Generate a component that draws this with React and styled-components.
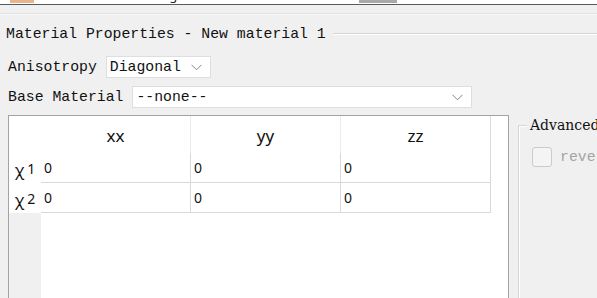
import React from "react";
import styled, { createGlobalStyle } from "styled-components";

const Global = createGlobalStyle`
  html, body { margin: 0; padding: 0; background: #f0f0f0; overflow: hidden; }
  body { width: 597px; height: 298px; }
  * { box-sizing: border-box; }
`;

const Page = styled.div`
  width: 597px;
  height: 298px;
  overflow: hidden;
  display: flex;
  flex-direction: column;
  background: #f0f0f0;
`;

const TopStrip = styled.div`
  height: 5px;
  background: #ffffff;
  border-bottom: 1px solid #5a5a5a;
  overflow: hidden;
  display: flex;
  align-items: flex-end;
`;

const StripItem = styled.span`
  flex: none;
  margin-left: ${(p) => p.$ml}px;
  width: ${(p) => p.$w}px;
  height: 16px;
  margin-top: -13px;
  line-height: 16px;
  font-family: "Noto Sans", sans-serif;
  font-size: 13px;
  color: #222;
  white-space: nowrap;
  overflow: hidden;
  background: ${(p) => p.$bg || "transparent"};
  align-self: flex-start;
`;

const Separator = styled.div`
  margin-top: 8px;
  height: 2px;
  border-top: 1px solid #e2e2e2;
  border-bottom: 1px solid #fafafa;
`;

const Body = styled.div`
  padding: 9px 0 0 8px;
  display: flex;
  flex-direction: column;
  flex: 1;
  min-height: 0;
`;

const TitleRow = styled.div`
  display: flex;
  align-items: center;
  height: 19px;
  margin-left: -2px;
`;

const Title = styled.span`
  font-family: "Liberation Mono", monospace;
  font-size: 14.8px;
  color: #111;
  white-space: nowrap;
`;

const Groove = styled.div`
  flex: 1;
  margin-left: 7px;
  height: 2px;
  border-top: 1px solid #d6d6d6;
  border-bottom: 1px solid #ffffff;
`;

const FormRow = styled.div`
  display: flex;
  align-items: center;
  gap: 9px;
  height: 22px;
  margin-top: ${(p) => p.$mt}px;
`;

const Label = styled.span`
  font-family: "Liberation Mono", monospace;
  font-size: 14.8px;
  color: #111;
  white-space: nowrap;
`;

const Combo = styled.div`
  width: ${(p) => p.$w}px;
  height: 22px;
  background: #ffffff;
  border: 1px solid #dedede;
  display: flex;
  align-items: center;
  padding: 0 8px 0 3px;
  font-family: "Liberation Mono", monospace;
  font-size: 14.8px;
  color: #111;
`;

const ComboText = styled.span`
  flex: 1;
  white-space: nowrap;
`;

const Chevron = () => (
  <svg width="11" height="7" viewBox="0 0 11 7">
    <polyline points="0.5,0.8 5.5,5.8 10.5,0.8" fill="none" stroke="#858585" strokeWidth="1" />
  </svg>
);

const Main = styled.div`
  display: flex;
  gap: 9px;
  margin-top: 7px;
  flex: 1;
  min-height: 0;
`;

const TableBox = styled.div`
  width: 501px;
  height: 200px;
  flex: none;
  border: 1px solid #a3a3a3;
  border-bottom: none;
  background: #ffffff;
  display: grid;
  grid-template-columns: 32px 150px 150px 150px 1fr;
  grid-template-rows: 37px 30px 30px 1fr;
`;

const Corner = styled.div`
  background: #ffffff;
`;

const HeadCell = styled.div`
  display: flex;
  align-items: center;
  justify-content: center;
  font-family: "Noto Sans", sans-serif;
  font-size: 17px;
  color: #111;
  border-right: 1px solid ${(p) => (p.$last ? "#dcdcdc" : "#ececec")};
  padding-top: 1px;
`;

const RowHead = styled.div`
  display: flex;
  align-items: center;
  justify-content: center;
  font-family: "Noto Sans", sans-serif;
  color: #111;
  background: #ffffff;
`;

const Chi = styled.span`
  font-size: 16px;
  line-height: 1;
  transform: translateY(2px);
`;

const Sub = styled.span`
  font-size: 14px;
  margin-left: 3px;
  line-height: 1;
  transform: translateY(1px);
`;

const Cell = styled.div`
  display: flex;
  align-items: center;
  padding-left: 3px;
  font-family: "Noto Sans", sans-serif;
  font-size: 14px;
  color: #111;
  border-right: 1px solid #d9d9d9;
  border-bottom: 1px solid #d9d9d9;
`;

const Blank = styled.div``;

const EmptyRowHeads = styled.div`
  background: #f0f0f0;
  grid-column: 1;
`;

const EmptyArea = styled.div`
  grid-column: 2 / span 4;
  background: #ffffff;
`;

const Group = styled.div`
  flex: 1;
  min-width: 0;
  position: relative;
`;

const GroupFrame = styled.div`
  margin-top: 10px;
  height: 200px;
  border-top: 1px solid #d6d6d6;
  border-left: 1px solid #d6d6d6;
  box-shadow: inset 1px 1px 0 #ffffff;
  padding: 21px 0 0 13px;
`;

const GroupTitle = styled.span`
  position: absolute;
  left: 9px;
  top: 0px;
  padding: 0 3px;
  background: #f0f0f0;
  font-family: "DejaVu Serif", serif;
  font-size: 14px;
  line-height: 20px;
  color: #111;
  white-space: nowrap;
`;

const CheckRow = styled.div`
  display: flex;
  align-items: center;
  gap: 8px;
  white-space: nowrap;
`;

const Box = styled.div`
  width: 20px;
  height: 20px;
  flex: none;
  border: 1px solid #cbcbcb;
  border-radius: 3px;
  background: #f4f4f4;
`;

const CheckLabel = styled.span`
  font-family: "Liberation Mono", monospace;
  font-size: 14.8px;
  color: #a4a4a4;
`;

const cols = ["xx", "yy", "zz"];
const rows = ["1", "2"];

export default function App() {
  return (
    <Page>
      <Global />
      <TopStrip>
        <StripItem $ml={10} $w={24} $bg="#e8b48a" />
        <StripItem $ml={51} $w={110}>Attributes&nbsp;&nbsp;&nbsp;Tags</StripItem>
        <StripItem $ml={164} $w={38} $bg="#a9a9a9" />
        <StripItem $ml={8} $w={100}>Simulati... Coord</StripItem>
        <StripItem $ml={95} $w={30} $bg="#3c6fb0" />
      </TopStrip>
      <Separator />
      <Body>
        <TitleRow>
          <Title>Material Properties - New material 1</Title>
          <Groove />
        </TitleRow>
        <FormRow $mt={13}>
          <Label>Anisotropy</Label>
          <Combo $w={105}>
            <ComboText>Diagonal</ComboText>
            <Chevron />
          </Combo>
        </FormRow>
        <FormRow $mt={8}>
          <Label>Base Material</Label>
          <Combo $w={340}>
            <ComboText>--none--</ComboText>
            <Chevron />
          </Combo>
        </FormRow>
        <Main>
          <TableBox>
            <Corner />
            {cols.map((c, i) => (
              <HeadCell key={c} $last={i === cols.length - 1}>{c}</HeadCell>
            ))}
            <Blank />
            {rows.map((r) => (
              <React.Fragment key={r}>
                <RowHead>
                  <Chi>χ</Chi>
                  <Sub>{r}</Sub>
                </RowHead>
                {cols.map((c) => (
                  <Cell key={c}>0</Cell>
                ))}
                <Blank />
              </React.Fragment>
            ))}
            <EmptyRowHeads />
            <EmptyArea />
          </TableBox>
          <Group>
            <GroupFrame>
              <CheckRow>
                <Box />
                <CheckLabel>reverse axes</CheckLabel>
              </CheckRow>
            </GroupFrame>
            <GroupTitle>Advanced</GroupTitle>
          </Group>
        </Main>
      </Body>
    </Page>
  );
}
